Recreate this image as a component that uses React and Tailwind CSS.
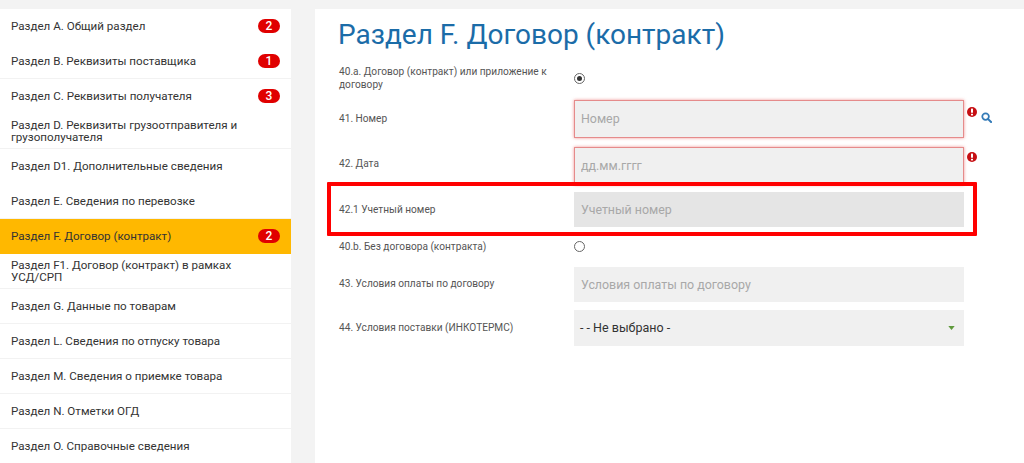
const sections = [
  { t: "Раздел A. Общий раздел", b: "2" },
  { t: "Раздел B. Реквизиты поставщика", b: "1", line: true },
  { t: "Раздел C. Реквизиты получателя", b: "3" },
  { t: "Раздел D. Реквизиты грузоотправителя и грузополучателя", line: true },
  { t: "Раздел D1. Дополнительные сведения" },
  { t: "Раздел E. Сведения по перевозке", line: true },
  { t: "Раздел F. Договор (контракт)", b: "2", active: true },
  { t: "Раздел F1. Договор (контракт) в рамках УСД/СРП", line: true },
  { t: "Раздел G. Данные по товарам", line: true },
  { t: "Раздел L. Сведения по отпуску товара", line: true },
  { t: "Раздел M. Сведения о приемке товара", line: true },
  { t: "Раздел N. Отметки ОГД", line: true },
  { t: "Раздел O. Справочные сведения" },
];

function Row({ s }) {
  return (
    <div
      className={`flex h-[35px] shrink-0 items-center justify-between border-b pl-[11px] pr-[11px] ${
        s.active ? "border-transparent bg-[#ffb800]" : s.line ? "border-[#f2f2f2]" : "border-transparent"
      }`}
    >
      <span className="w-[235px] text-[11.6px] leading-[12px] text-[#333]">{s.t}</span>
      {s.b && (
        <span className="flex h-[14px] w-[22px] items-center justify-center rounded-full bg-[#e00000] text-[12px] font-medium leading-none text-white">
          {s.b}
        </span>
      )}
    </div>
  );
}

function ErrorIcon({ className }) {
  return (
    <svg viewBox="0 0 10 10" className={`h-[10px] w-[10px] shrink-0 ${className}`}>
      <circle cx="5" cy="5" r="5" fill="#c60f13" />
      <rect x="4" y="1.6" width="2" height="4.2" rx="0.6" fill="#fff" />
      <rect x="4" y="6.7" width="2" height="1.8" rx="0.4" fill="#fff" />
    </svg>
  );
}

function SearchIcon() {
  return (
    <svg viewBox="0 0 12 12" className="ml-[4px] mb-[3px] h-[11px] w-[11px] shrink-0">
      <circle cx="5" cy="5" r="3.6" fill="none" stroke="#337ab7" strokeWidth="1.9" />
      <path d="M7.8 7.8 L11 11" stroke="#337ab7" strokeWidth="2.2" strokeLinecap="round" />
    </svg>
  );
}

function Label({ children, className = "" }) {
  return <div className={`w-[235px] shrink-0 pr-[20px] text-[10.15px] leading-[13px] text-[#555] ${className}`}>{children}</div>;
}

function Field({ placeholder, className = "" }) {
  return (
    <input
      readOnly
      placeholder={placeholder}
      className={`h-full w-[390px] shrink-0 text-[12.4px] outline-none placeholder:text-[#a8a8a8] ${className}`}
    />
  );
}

const invalid = "border border-[#e58b8b] bg-[#f0f0f0] px-[6px] pb-[2px] shadow-[0_0_3px_rgba(230,60,60,0.55)]";

export default function App() {
  return (
    <div className="relative flex h-[463px] w-[1024px] overflow-hidden bg-[#f3f3f3] pt-[9px] font-['Roboto',sans-serif]">
      <aside className="flex w-[291px] shrink-0 flex-col bg-white">
        {sections.map((s) => (
          <Row key={s.t} s={s} />
        ))}
      </aside>
      <main className="ml-[24px] flex-1 bg-white pl-[24px]">
        <h1 className="-ml-px mt-[8px] h-[36px] text-[28px] font-normal leading-[36px] text-[#1b6ca8]">
          Раздел F. Договор (контракт)
        </h1>
        <div className="mt-[9px] flex flex-col">
          <div className="flex h-[32px] items-center">
            <Label>40.a. Договор (контракт) или приложение к договору</Label>
            <span className="flex h-[11px] w-[11px] items-center justify-center rounded-full border border-[#666] bg-white">
              <span className="h-[5px] w-[5px] rounded-full bg-[#333]" />
            </span>
          </div>
          <div className="mt-[6px] flex h-[38px] items-center">
            <Label className="pb-[2px]">41. Номер</Label>
            <Field placeholder="Номер" className={invalid} />
            <ErrorIcon className="ml-[3px] mb-[14px]" />
            <SearchIcon />
          </div>
          <div className="mt-[9px] flex h-[38px] items-center">
            <Label className="pb-[6px]">42. Дата</Label>
            <Field placeholder="дд.мм.гггг" className={invalid} />
            <ErrorIcon className="ml-[3px] mb-[18px]" />
          </div>
          <div className="mt-[7px] flex h-[35px] items-center">
            <Label>42.1 Учетный номер</Label>
            <Field placeholder="Учетный номер" className="bg-[#e5e5e5] px-[7px]" />
          </div>
          <div className="mt-[9px] flex h-[20px] items-center">
            <Label>40.b. Без договора (контракта)</Label>
            <span className="h-[11px] w-[11px] rounded-full border border-[#666] bg-white" />
          </div>
          <div className="mt-[11px] flex h-[35px] items-center">
            <Label className="pb-[2px]">43. Условия оплаты по договору</Label>
            <Field placeholder="Условия оплаты по договору" className="bg-[#f0f0f0] px-[7px]" />
          </div>
          <div className="mt-[8px] flex h-[36px] items-center">
            <Label className="pb-[2px]">44. Условия поставки (ИНКОТЕРМС)</Label>
            <div className="flex h-full w-[390px] shrink-0 items-center justify-between bg-[#f0f0f0] pl-[6px] pr-[9px] text-[12.5px] text-[#333]">
              <span>- - Не выбрано -</span>
              <svg viewBox="0 0 8 5" className="h-[4px] w-[7px]">
                <path d="M0 0H8L4 5Z" fill="#5f9a3c" />
              </svg>
            </div>
          </div>
        </div>
      </main>
      <div className="pointer-events-none absolute left-[327px] top-[182px] h-[54px] w-[650px] rounded-[1px] border-[4px] border-[#ff0000]" />
    </div>
  );
}
